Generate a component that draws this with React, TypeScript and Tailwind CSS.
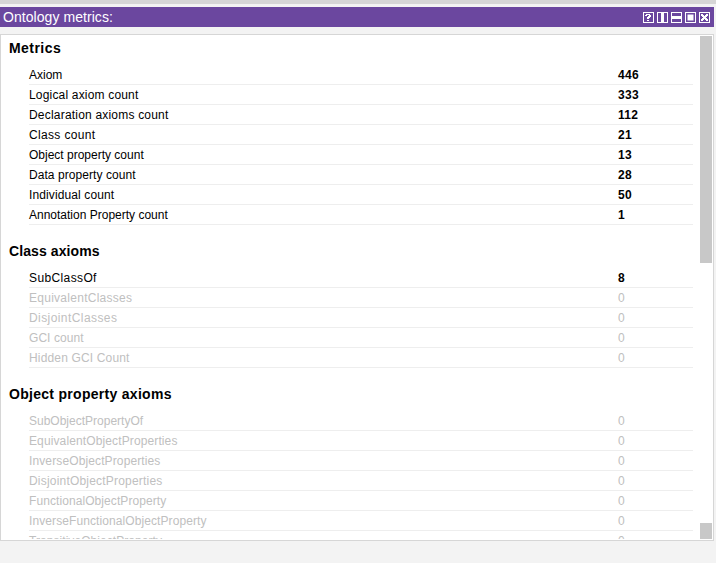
import React from "react";

type Metric = { label: string; value: number; track?: string };
type Group = { title: string; track?: string; rows: Metric[] };

const groups: Group[] = [
  {
    title: "Metrics",
    track: "tracking-[0.45px]",
    rows: [
      { label: "Axiom", value: 446 },
      { label: "Logical axiom count", value: 333, track: "tracking-[0.18px]" },
      { label: "Declaration axioms count", value: 112, track: "tracking-[0.2px]" },
      { label: "Class count", value: 21, track: "tracking-[0.34px]" },
      { label: "Object property count", value: 13 },
      { label: "Data property count", value: 28, track: "tracking-[0.06px]" },
      { label: "Individual count", value: 50, track: "tracking-[0.12px]" },
      { label: "Annotation Property count", value: 1 },
    ],
  },
  {
    title: "Class axioms",
    track: "tracking-[0.1px]",
    rows: [
      { label: "SubClassOf", value: 8, track: "tracking-[0.38px]" },
      { label: "EquivalentClasses", value: 0, track: "tracking-[0.27px]" },
      { label: "DisjointClasses", value: 0, track: "tracking-[0.42px]" },
      { label: "GCI count", value: 0, track: "tracking-[0.06px]" },
      { label: "Hidden GCI Count", value: 0, track: "tracking-[0.16px]" },
    ],
  },
  {
    title: "Object property axioms",
    track: "tracking-[0.29px]",
    rows: [
      { label: "SubObjectPropertyOf", value: 0 },
      { label: "EquivalentObjectProperties", value: 0, track: "tracking-[0.12px]" },
      { label: "InverseObjectProperties", value: 0, track: "tracking-[0.12px]" },
      { label: "DisjointObjectProperties", value: 0, track: "tracking-[0.2px]" },
      { label: "FunctionalObjectProperty", value: 0, track: "tracking-[0.08px]" },
      { label: "InverseFunctionalObjectProperty", value: 0, track: "tracking-[0.09px]" },
      { label: "TransitiveObjectProperty", value: 0, track: "tracking-[0.06px]" },
    ],
  },
];

const glyphs: React.ReactNode[] = [
  <path key="help" d="M2 3h1v-1h4v1h1v2h-1v1h-1v1h-2v-2h1v-1h1v-1h-2v1h-2zM4 8h2v1h-2z" />,
  <path key="split-v" d="M4 1h3v9h-3z" />,
  <path key="split-h" d="M1 4h9v3h-9z" />,
  <path key="float" d="M2.5 2.5h6v6h-6z" shapeRendering="geometricPrecision" />,
  <path key="close" d="M2 2h2v1h1v1h1v-1h1v-1h2v2h-1v1h-1v1h1v1h1v2h-2v-1h-1v-1h-1v1h-1v1h-2v-2h1v-1h1v-1h-1v-1h-1z" />,
];

function HeaderButton({ children }: { children: React.ReactNode }) {
  return (
    <button className="block size-[11px]">
      <svg width="11" height="11" viewBox="0 0 11 11" shapeRendering="crispEdges" fill="white" className="block">
        <path d="M0 0h11v11h-11zM1 1v9h9v-9z" fillRule="evenodd" />
        {children}
      </svg>
    </button>
  );
}

function MetricRow({ label, value, track = "" }: Metric) {
  const on = value > 0;
  return (
    <div className={`flex h-5 items-center border-b border-[#eeeeee] ${on ? "text-black" : "text-[#c0c0c0]"}`}>
      <span className={`w-[589px] whitespace-nowrap ${track}`}>{label}</span>
      <span className={on ? "font-bold tracking-[0.3px]" : ""}>{value}</span>
    </div>
  );
}

export default function App() {
  return (
    <div className="flex h-[563px] w-[716px] flex-col overflow-hidden bg-[#f3f3f3] font-['Liberation_Sans',Arial,sans-serif] text-xs">
      <div className="h-1 shrink-0 bg-[#d6d6d6]" />
      <header className="mt-[3px] flex h-5 w-[714px] shrink-0 items-center justify-between bg-[#6b479f] pr-1 pl-[3px] text-white">
        <h1 className="text-sm leading-5 tracking-[0.06px]">Ontology metrics:</h1>
        <div className="flex gap-[3px]">
          {glyphs.map((glyph, i) => (
            <HeaderButton key={i}>{glyph}</HeaderButton>
          ))}
        </div>
      </header>
      <main className="mt-[7px] flex h-[507px] w-[714px] shrink-0 border border-[#d6d6d6] bg-white py-px pr-px">
        <div className="w-[692px] overflow-hidden pt-0.5 pl-2">
          {groups.map((group) => (
            <section key={group.title} className="mb-4">
              <h2 className={`mb-[7px] h-5 text-sm font-bold whitespace-nowrap ${group.track ?? ""}`}>{group.title}</h2>
              <div className="ml-5">
                {group.rows.map((row) => (
                  <MetricRow key={row.label} {...row} />
                ))}
              </div>
            </section>
          ))}
        </div>
        <div className="ml-[7px] flex w-3 flex-col justify-between">
          <div className="h-[227px] bg-[#c8c8c8]" />
          <div className="h-4 bg-[#c8c8c8]" />
        </div>
      </main>
    </div>
  );
}
